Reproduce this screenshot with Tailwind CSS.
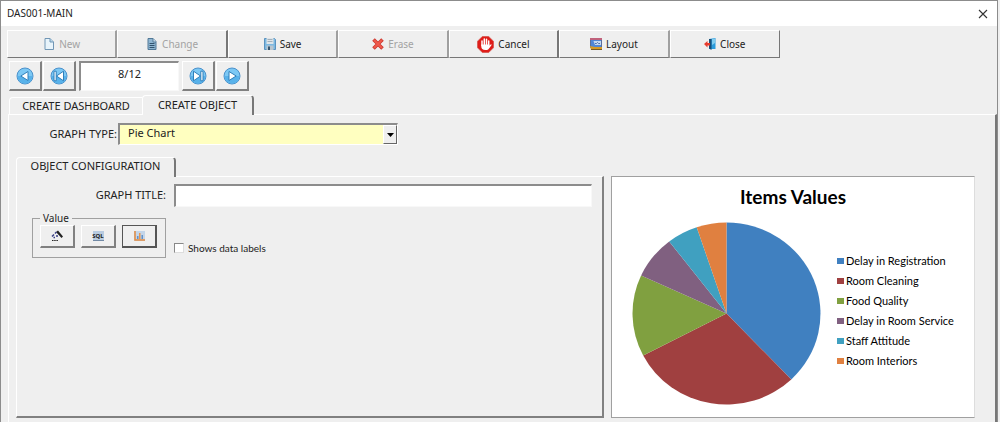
<!DOCTYPE html>
<html lang="en">
<head>
    <meta charset="UTF-8">
    <meta name="viewport" content="width=device-width, initial-scale=1.0">
    <title>DAS001-MAIN</title>
    <script src="https://cdn.jsdelivr.net/npm/@tailwindcss/browser@4"></script>
</head>
<body class="bg-[#efefef] font-['Noto_Sans',sans-serif] text-[11px] text-[#222]">

    <!-- Window -->
    <div class="min-h-screen mr-[2px] flex flex-col border-t border-x border-[#8c8c8c]">

        <!-- Title bar -->
        <header class="h-[25px] pl-[6px] pr-[9px] flex items-center justify-between bg-white">
            <h1 class="text-[10px]">DAS001-MAIN</h1>
            <button type="button" aria-label="Close window">
                <svg class="size-[10px]" viewBox="0 0 10 10" fill="none" stroke="#333" stroke-width="1.1"><path d="M1 1l8 8M9 1l-8 8"/></svg>
            </button>
        </header>

        <!-- Toolbar -->
        <div class="mt-1 ml-[6px] w-[773px] h-[28px] grid grid-cols-7 text-[10px]">
            <button type="button" disabled class="flex items-center justify-center gap-1 border-t border-l border-t-white border-l-white border-b border-b-[#777] border-r-2 border-r-[#a0a0a0] text-[#a3a3a3]">
                <svg class="size-[12px]" viewBox="0 0 12 12"><path d="M2 .5h5l3.500 3.500v7.500H2z" fill="#e8f4fb" stroke="#7196b5"/><path d="M7 .5V4h3.500" fill="#b9d8ec" stroke="#7196b5"/></svg>
                New
            </button>
            <button type="button" disabled class="flex items-center justify-center gap-1 border-t border-l border-t-white border-l-white border-b border-b-[#777] border-r-2 border-r-[#777] text-[#a3a3a3]">
                <svg class="size-[12px]" viewBox="0 0 12 12"><path d="M2 .5h5l3 3v8H2z" fill="#8fb6d2" stroke="#527997"/><path d="M7 .5V4h3" fill="#d4e6f2" stroke="#527997"/><path d="M3.500 5.500h5M3.500 7.500h5M3.500 9.500h5" stroke="#31536e"/></svg>
                Change
            </button>
            <button type="button" class="flex items-center justify-center gap-1 border-t border-l border-t-white border-l-white border-b border-b-[#777] border-r-2 border-r-[#a0a0a0]">
                <svg class="size-[12px]" viewBox="0 0 12 12"><path d="M.5.5h10l1 1v10H.5z" fill="#7db9e2" stroke="#5b93bf"/><path d="M2.500 0h7v6h-7z" fill="#dfe5e9"/><path d="M3.500 1.500h5M3.500 3.500h5" stroke="#a3b0ba"/><path d="M2.500 7.500h7V12h-7z" fill="#b9c5ce"/><path d="M4 8.500h2V12H4z" fill="#35556e"/></svg>
                Save
            </button>
            <button type="button" disabled class="flex items-center justify-center gap-1 border-t border-l border-t-white border-l-white border-b border-b-[#777] border-r-2 border-r-[#a0a0a0] text-[#a3a3a3]">
                <svg class="size-[12px]" viewBox="0 0 12 12" fill="none"><path d="M1.500 1.500l9 9M10.500 1.500l-9 9" stroke="#c9372f" stroke-width="3.600"/><path d="M2 2l8 8M10 2l-8 8" stroke="#f0594b" stroke-width="2.200"/></svg>
                Erase
            </button>
            <button type="button" class="flex items-center justify-center gap-1 border-t border-l border-t-white border-l-white border-b border-b-[#777] border-r-2 border-r-[#777]">
                <svg class="size-[17px]" viewBox="0 0 17 17"><path d="M5.300.5h6.400l4.800 4.800v6.400l-4.800 4.800H5.300L.5 11.700V5.300z" fill="#df1d19" stroke="#d8605a"/><path d="M5 9.500V5M7.300 9V3M9.500 9V3.200M11.700 9.500V5" stroke="#fff" stroke-width="1.500" stroke-linecap="round"/><path d="M4.300 8.500h8.100v1.300l1.500-1.500c.7 0 .8.600.4 1.100L12 12.500c-.8 1-1.500 1.500-3.500 1.500-3 0-4.200-1.500-4.200-3.500z" fill="#fff"/></svg>
                Cancel
            </button>
            <button type="button" class="flex items-center justify-center gap-1 border-t border-l border-t-white border-l-white border-b border-b-[#777] border-r-2 border-r-[#a0a0a0]">
                <svg class="size-[12px]" viewBox="0 0 12 12"><path d="M.5.5h11v9H.5z" fill="#4f86d6" stroke="#596e9c"/><path d="M0 0h12v2H0z" fill="#c0627c"/><path d="M3.500 3H11v4H5z" fill="#c3d8f2"/><path d="M5 5.500h1.500l1-1 1 1H10" stroke="#526fa8" fill="none"/><path d="M0 8l5 1h7v3H1z" fill="#d69a25"/><path d="M1 11.500h11" stroke="#795b24"/></svg>
                Layout
            </button>
            <button type="button" class="flex items-center justify-center gap-1 border-t border-l border-t-white border-l-white border-b border-b-[#777] border-r border-r-[#777]">
                <svg class="size-[12px]" viewBox="0 0 12 12"><path d="M5 1l6.500-1v11L5 11z" fill="#2b9bdc"/><path d="M5 1h2.500v11L5 10.500z" fill="#174e78"/><path d="M8 1l3-.5V5L8 7z" fill="#80ccf0"/><path d="M0 6l3.500-3v2H6v2.500H3.500v2z" fill="#e73c2e"/></svg>
                Close
            </button>
        </div>

        <!-- Record navigation -->
        <nav class="mt-[3px] ml-2 h-[30px] flex gap-px" aria-label="Records">
            <button type="button" aria-label="Previous" class="w-[33px] flex items-center justify-center border-t border-l border-t-white border-l-white border-b-2 border-r-2 border-b-[#808080] border-r-[#808080]">
                <svg class="size-[18px]" viewBox="0 0 18 18"><circle cx="9" cy="9" r="8" fill="#7cc8f4" stroke="#4b91cb"/><path d="M1.500 9a7.500 7.500 0 0 0 15 0z" fill="#58b2ea"/><path d="M12 4.500v9L4.800 9z" fill="#fff" stroke="#2f7fba"/></svg>
            </button>
            <button type="button" aria-label="First" class="w-[33px] flex items-center justify-center border-t border-l border-t-white border-l-white border-b-2 border-r-2 border-b-[#808080] border-r-[#808080]">
                <svg class="size-[18px]" viewBox="0 0 18 18"><circle cx="9" cy="9" r="8" fill="#7cc8f4" stroke="#4b91cb"/><path d="M1.500 9a7.500 7.500 0 0 0 15 0z" fill="#58b2ea"/><path d="M13.500 4.200v9.600L6.500 9zM4 4.200h2.200v9.600H4z" fill="#fff" stroke="#2f7fba"/></svg>
            </button>
            <input type="text" value="8/12" aria-label="Record" class="mx-[2px] w-[100px] pb-[5px] bg-white text-center border-t-2 border-l-2 border-t-[#8c8c8c] border-l-[#8c8c8c] border-b border-r border-b-[#f8f8f8] border-r-[#f8f8f8]">
            <button type="button" aria-label="Last" class="w-[33px] flex items-center justify-center border-t border-l border-t-white border-l-white border-b-2 border-r-2 border-b-[#808080] border-r-[#808080]">
                <svg class="size-[18px]" viewBox="0 0 18 18"><circle cx="9" cy="9" r="8" fill="#7cc8f4" stroke="#4b91cb"/><path d="M1.500 9a7.500 7.500 0 0 0 15 0z" fill="#58b2ea"/><path d="M4.500 4.200v9.600L11.500 9zM11.800 4.200H14v9.600h-2.200z" fill="#fff" stroke="#2f7fba"/></svg>
            </button>
            <button type="button" aria-label="Next" class="w-[33px] flex items-center justify-center border-t border-l border-t-white border-l-white border-b-2 border-r-2 border-b-[#808080] border-r-[#808080]">
                <svg class="size-[18px]" viewBox="0 0 18 18"><circle cx="9" cy="9" r="8" fill="#7cc8f4" stroke="#4b91cb"/><path d="M1.500 9a7.500 7.500 0 0 0 15 0z" fill="#58b2ea"/><path d="M6 4.500v9L13.200 9z" fill="#fff" stroke="#2f7fba"/></svg>
            </button>
        </nav>

        <!-- Tabs -->
        <div class="mt-[4px] ml-2 flex items-end leading-4" role="tablist">
            <button type="button" role="tab" class="w-[133px] h-[17px] border-t border-l border-white rounded-tl-sm">CREATE DASHBOARD</button>
            <button type="button" role="tab" aria-selected="true" class="w-[112px] h-[20px] -mb-px pb-[2px] z-10 bg-[#efefef] border-t border-l border-t-white border-l-white border-r-2 border-r-[#777] rounded-t-sm">CREATE OBJECT</button>
        </div>

        <!-- Tab page -->
        <main class="ml-[7px] flex-1 pl-[7px] pr-5 pt-2 border-t border-l border-t-white border-l-white border-r-2 border-r-[#777]">

            <div class="flex items-center">
                <label for="graphType" class="w-[102px] pr-px text-right">GRAPH TYPE:</label>
                <div class="relative">
                    <select id="graphType" class="block appearance-none w-[280px] h-[22px] pl-2 pb-[2px] bg-[#ffffc0] border-t-2 border-l-2 border-t-[#8c8c8c] border-l-[#8c8c8c] border-b border-r border-b-white border-r-white">
                        <option>Pie Chart</option>
                    </select>
                    <span class="absolute right-px top-[2px] bottom-px w-[14px] flex items-center justify-center bg-[#efefef] border-t border-l border-t-white border-l-white border-b border-r border-b-[#666] border-r-[#666] pointer-events-none">
                        <svg class="w-[7px] h-[4px]" viewBox="0 0 7 4"><path d="M0 0h7L3.500 4z" fill="#000"/></svg>
                    </span>
                </div>
            </div>

            <div class="mt-3 flex gap-[7px]">

                <!-- Object configuration -->
                <div class="flex-1 flex flex-col">
                    <div role="tablist" class="flex">
                        <button type="button" role="tab" aria-selected="true" class="w-[160px] h-[20px] -mb-px pb-[3px] z-10 bg-[#efefef] border-t border-l border-t-white border-l-white border-r-2 border-r-[#777] rounded-t-sm leading-4">OBJECT CONFIGURATION</button>
                    </div>
                    <section class="flex-1 pr-[10px] pt-[7px] border-t border-l border-t-white border-l-white border-b-2 border-r-2 border-b-[#808080] border-r-[#808080]">
                        <div class="flex items-center">
                            <label for="graphTitle" class="w-[157px] pr-2 text-right">GRAPH TITLE:</label>
                            <input type="text" id="graphTitle" class="flex-1 h-[23px] px-1 bg-white border-t-2 border-l-2 border-t-[#8c8c8c] border-l-[#8c8c8c] border-b border-r border-b-[#f8f8f8] border-r-[#f8f8f8]">
                        </div>
                        <div class="mt-1 flex items-end">
                            <fieldset class="ml-[15px] w-[134px] h-[47px] px-[7px] border border-[#a0a0a0]">
                                <legend class="px-[3px] text-[10px] leading-[14px]">Value</legend>
                                <div class="flex gap-[6px]">
                                    <button type="button" aria-label="Formula" class="w-[35px] h-[23px] flex items-center justify-center border-t border-l border-t-white border-l-white border-b-2 border-r-2 border-b-[#808080] border-r-[#808080]">
                                        <svg class="size-[12px]" viewBox="0 0 12 12" fill="none"><path d="M5 2l2-1.500 5 6L10.500 8z" fill="#222"/><path d="M1 6.500l2-2M4 3.500l1.500-1.500M2.500 7.500h1.500M5 6h2" stroke="#3a3f86" stroke-width="1.500"/><path d="M1 10.500h6" stroke="#222" stroke-width="1.200" stroke-dasharray="1.500 .7"/></svg>
                                    </button>
                                    <button type="button" aria-label="SQL" class="w-[35px] h-[23px] flex items-center justify-center border-t border-l border-t-white border-l-white border-b-2 border-r-2 border-b-[#808080] border-r-[#808080]">
                                        <span class="w-[11px] h-[10px] flex items-center justify-center bg-[#b8cbe0] border-b border-[#7189a5] text-[6px] leading-none font-bold">SQL</span>
                                    </button>
                                    <button type="button" aria-label="Chart data" class="w-[35px] h-[23px] flex items-center justify-center border border-[#555] border-b-2 border-r-2">
                                        <svg class="w-[11px] h-[10px]" viewBox="0 0 11 10"><path d="M0 0h11v10H0z" fill="#c3d5e9"/><path d="M1 0v9h10" fill="none" stroke="#e58b3e" stroke-width="1.500"/><path d="M3 5h1.500v3H3zM7.500 4H9v4H7.500z" fill="#6291c8"/><path d="M5 2h1.500v6H5z" fill="#e8964e"/></svg>
                                    </button>
                                </div>
                            </fieldset>
                            <label class="ml-[8px] mb-[3px] flex items-center gap-1 font-['Lato',sans-serif] text-[10px] leading-[14px]">
                                <input type="checkbox" class="appearance-none size-[10px] bg-white border border-t-[#888] border-l-[#888] border-b-[#ddd] border-r-[#ddd] checked:bg-[#555]">
                                Shows data labels
                            </label>
                        </div>
                    </section>
                </div>

                <!-- Chart -->
                <figure class="mt-[19px] w-[364px] h-[242px] pl-5 bg-white border border-[#a0a0a0] border-r-[#ddd] font-['Lato',sans-serif] text-black">
                    <figcaption class="pt-2 pr-5 text-center text-[19px] leading-6 font-bold">Items Values</figcaption>
                    <div class="mt-[13px] flex items-center gap-4">
                        <svg class="w-[189px] h-[183px]" viewBox="0 0 189 183" role="img" aria-label="Pie chart of items values">
                            <path d="M94.500 91.500V.5A94 91 0 0 1 159.300 157.400z" fill="#4080c0"/>
                            <path d="M94.500 91.500L159.300 157.400A94 91 0 0 1 11.200 133.600z" fill="#a04040"/>
                            <path d="M94.500 91.500L11.200 133.600A94 91 0 0 1 9.100 53.500z" fill="#80a040"/>
                            <path d="M94.500 91.500L9.100 53.500A94 91 0 0 1 37.200 19.400z" fill="#806080"/>
                            <path d="M94.500 91.500L37.200 19.400A94 91 0 0 1 64.700 5.200z" fill="#40a0c0"/>
                            <path d="M94.500 91.500L64.700 5.200A94 91 0 0 1 94.500.5z" fill="#e08040"/>
                        </svg>
                        <ul class="mb-[6px] text-[11px] leading-5">
                            <li class="flex items-center gap-[2px]"><span class="w-[7px] h-[6px] bg-[#4080c0]"></span>Delay in Registration</li>
                            <li class="flex items-center gap-[2px]"><span class="w-[7px] h-[6px] bg-[#a04040]"></span>Room Cleaning</li>
                            <li class="flex items-center gap-[2px]"><span class="w-[7px] h-[6px] bg-[#80a040]"></span>Food Quality</li>
                            <li class="flex items-center gap-[2px]"><span class="w-[7px] h-[6px] bg-[#806080]"></span>Delay in Room Service</li>
                            <li class="flex items-center gap-[2px]"><span class="w-[7px] h-[6px] bg-[#40a0c0]"></span>Staff Attitude</li>
                            <li class="flex items-center gap-[2px]"><span class="w-[7px] h-[6px] bg-[#e08040]"></span>Room Interiors</li>
                        </ul>
                    </div>
                </figure>
            </div>
        </main>
    </div>

</body>
</html>
